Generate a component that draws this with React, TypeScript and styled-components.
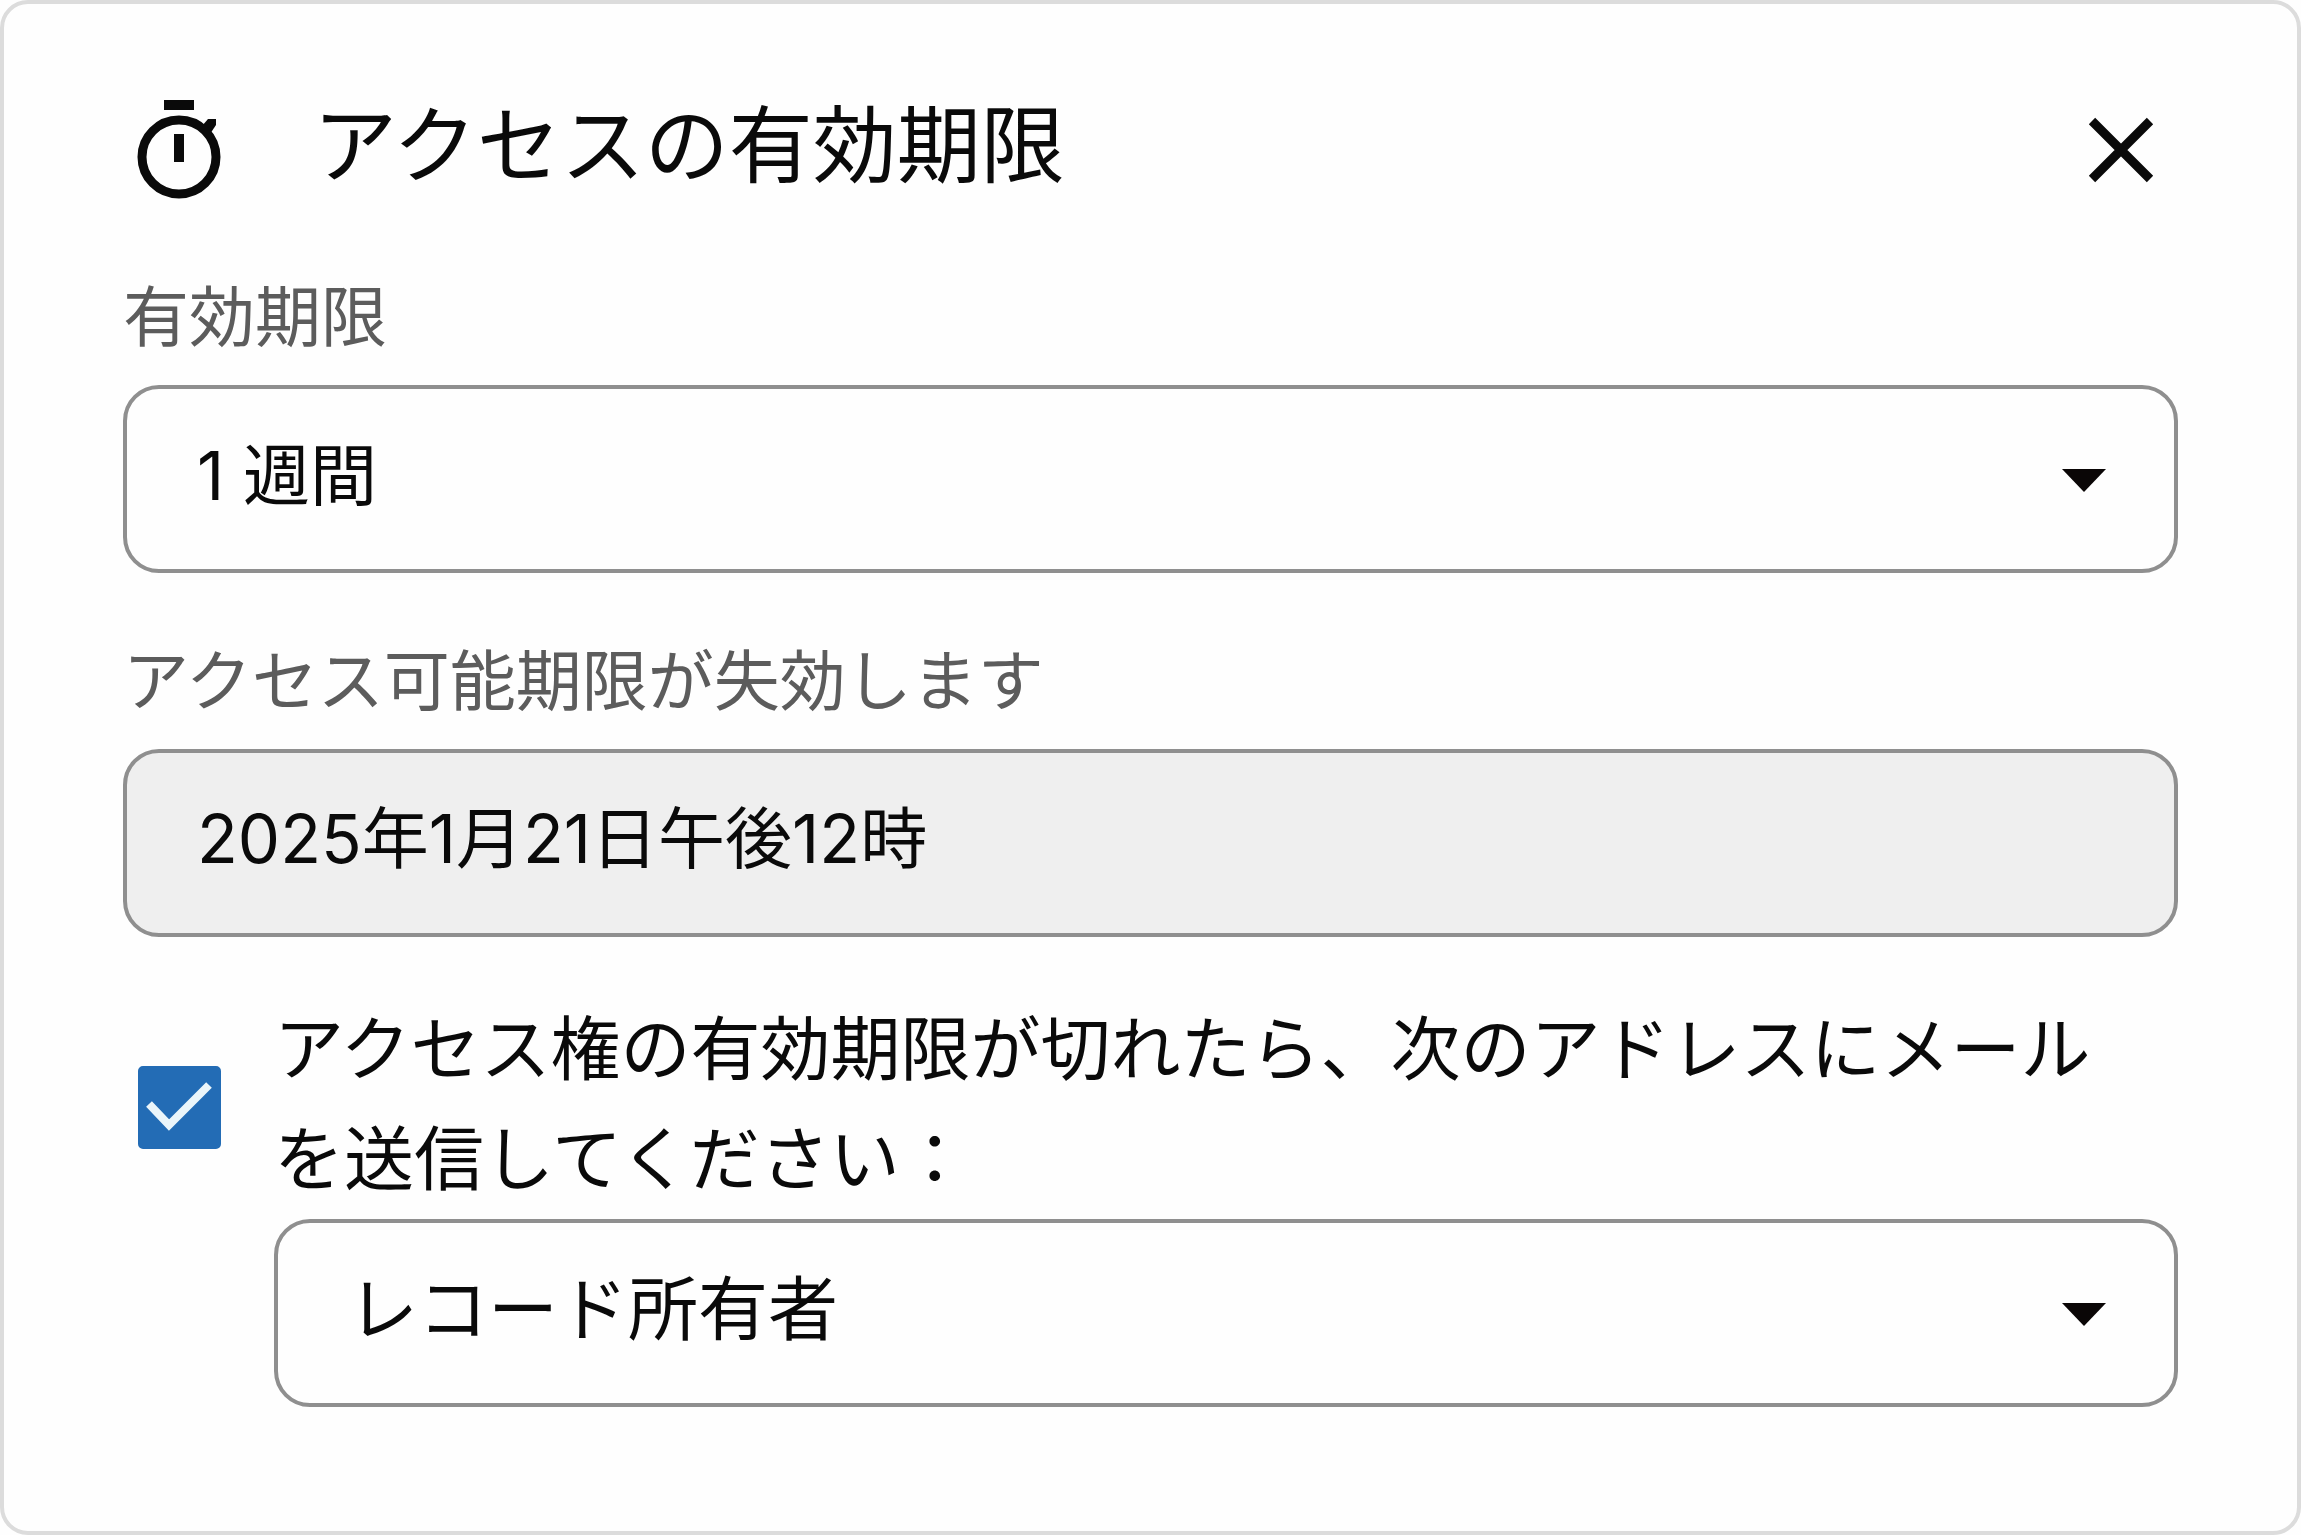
import React, { useState } from "react";
import styled, { createGlobalStyle } from "styled-components";

const GlobalStyle = createGlobalStyle`
  *, *::before, *::after { box-sizing: border-box; }
  body {
    margin: 0;
    background: #fefefe;
    color: #0a0a0a;
    font-family: Inter, "Noto Sans CJK JP", sans-serif;
  }
`;

const Card = styled.form`
  display: flex;
  flex-direction: column;
  min-height: 100vh;
  padding: 84px 119px 96px;
  border: 4px solid #dcdcdc;
  border-radius: 28px;
  background: #fefefe;
`;

const Header = styled.header`
  display: flex;
  align-items: center;
  gap: 92px;
  padding: 0 20px 0 14px;
  margin-bottom: 59px;
`;

const Title = styled.h2`
  flex: 1;
  margin: 0;
  padding-bottom: 4px;
  font-size: 84px;
  font-weight: 400;
  line-height: 116px;
`;

const CloseButton = styled.button`
  display: flex;
  padding: 6px 4px 2px;
  border: 0;
  background: none;
  color: inherit;
  cursor: pointer;
`;

const TimerSvg = styled.svg`
  flex: none;
  margin-top: 6px;
`;

const Field = styled.div`
  display: flex;
  flex-direction: column;
  margin-bottom: 58px;
`;

const FieldLabel = styled.label`
  margin-bottom: 18px;
  color: #5c5c5c;
  font-size: 66px;
  line-height: 100px;
`;

const SelectBox = styled.div`
  display: grid;
  align-items: center;

  > * {
    grid-area: 1 / 1;
  }

  > svg {
    justify-self: end;
    margin-right: 70px;
    pointer-events: none;
  }
`;

const controlStyle = `
  width: 100%;
  height: 188px;
  margin: 0;
  border: 4px solid #8f8f8f;
  border-radius: 36px;
  color: inherit;
  font-family: inherit;
`;

const Select = styled.select<{ $size: number }>`
  ${controlStyle}
  padding: 0 70px 8px;
  font-size: ${(p) => p.$size}px;
  appearance: none;
  background: #fefefe;
`;

const DateInput = styled.input`
  ${controlStyle}
  padding: 0 70px 20px;
  font-size: 67px;
  background: #efefef;
`;

const Notice = styled.div`
  display: grid;
  grid-template-columns: 83px 1fr;
  column-gap: 53px;
  align-items: center;
  padding-left: 15px;
`;

const NoticeLabel = styled.label`
  padding: 0 40px 4px 0;
  font-size: 70px;
  line-height: 110px;
`;

const NoticeSelect = styled(SelectBox)`
  grid-column: 2;
`;

const CheckBox = styled.span`
  display: grid;

  > * {
    grid-area: 1 / 1;
  }

  > svg {
    pointer-events: none;
  }
`;

const CheckInput = styled.input`
  appearance: none;
  width: 83px;
  height: 83px;
  margin: 0;
  border: 4px solid #236cb5;
  border-radius: 5px;
  background: #fefefe;

  &:checked {
    background: #236cb5;
  }
`;

const TimerIcon = () => (
  <TimerSvg width="84" height="104" viewBox="0 0 84 104" fill="none" aria-hidden="true">
    <path d="M27 1h30v10H27z" fill="currentColor" />
    <path d="M37 35h10v28H37z" fill="currentColor" />
    <path d="M65 27l6-7h8v6l-6 9z" fill="currentColor" />
    <circle cx="42" cy="58" r="37" stroke="currentColor" strokeWidth="9" />
  </TimerSvg>
);

const CloseIcon = () => (
  <svg width="66" height="66" viewBox="0 0 66 66" fill="none" aria-hidden="true">
    <path d="M4 4l58 58M62 4L4 62" stroke="currentColor" strokeWidth="9" />
  </svg>
);

const CaretIcon = () => (
  <svg width="48" height="26" viewBox="0 0 48 26" aria-hidden="true">
    <path d="M2 3h44L24 26z" fill="#0a0606" />
  </svg>
);

const CheckIcon = () => (
  <svg width="83" height="83" viewBox="0 0 83 83" fill="none" aria-hidden="true">
    <path d="M11 38l20 21 40-40" stroke="#eaf5fa" strokeWidth="8" />
  </svg>
);

export default function App() {
  const [period, setPeriod] = useState("week");
  const [notify, setNotify] = useState(true);
  const [recipient, setRecipient] = useState("owner");

  return (
    <>
      <GlobalStyle />
      <Card onSubmit={(e) => e.preventDefault()}>
        <Header>
          <TimerIcon />
          <Title>アクセスの有効期限</Title>
          <CloseButton type="button" aria-label="閉じる">
            <CloseIcon />
          </CloseButton>
        </Header>

        <Field>
          <FieldLabel htmlFor="period">有効期限</FieldLabel>
          <SelectBox>
            <Select
              id="period"
              $size={67}
              value={period}
              onChange={(e) => setPeriod(e.target.value)}
            >
              <option value="week">1 週間</option>
            </Select>
            <CaretIcon />
          </SelectBox>
        </Field>

        <Field>
          <FieldLabel htmlFor="expires">アクセス可能期限が失効します</FieldLabel>
          <DateInput id="expires" type="text" readOnly value="2025年1月21日午後12時" />
        </Field>

        <Notice>
          <CheckBox>
            <CheckInput
              id="notify"
              type="checkbox"
              checked={notify}
              onChange={(e) => setNotify(e.target.checked)}
            />
            {notify && <CheckIcon />}
          </CheckBox>
          <NoticeLabel htmlFor="notify">
            アクセス権の有効期限が切れたら、次のアドレスにメールを送信してください：
          </NoticeLabel>
          <NoticeSelect>
            <Select
              aria-label="送信先"
              $size={70}
              value={recipient}
              onChange={(e) => setRecipient(e.target.value)}
            >
              <option value="owner">レコード所有者</option>
            </Select>
            <CaretIcon />
          </NoticeSelect>
        </Notice>
      </Card>
    </>
  );
}
